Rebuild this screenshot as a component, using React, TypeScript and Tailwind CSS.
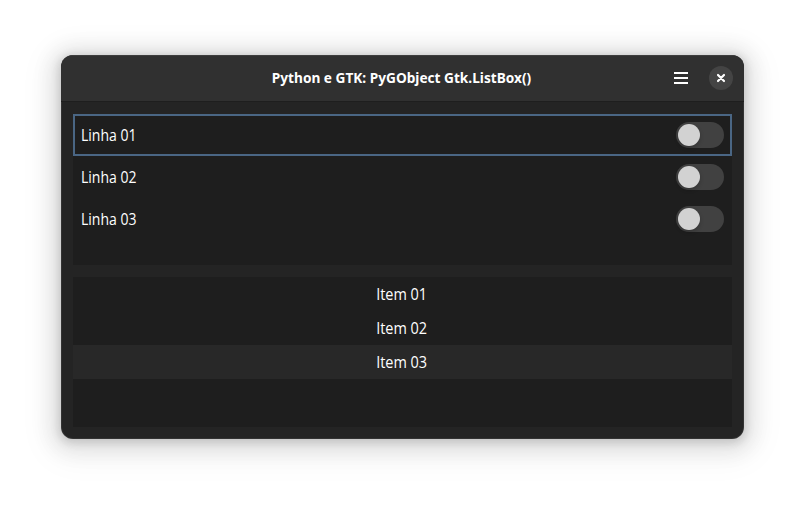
import { useState } from "react";

const lines = ["Linha 01", "Linha 02", "Linha 03"];
const items = ["Item 01", "Item 02", "Item 03"];

function Switch({ label }: { label: string }) {
  const [on, setOn] = useState(false);
  return (
    <button
      role="switch"
      aria-checked={on}
      aria-label={label}
      onClick={() => setOn(!on)}
      className={`flex h-[26px] w-12 items-center rounded-full p-0.5 ${on ? "justify-end bg-[#3584e4]" : "bg-[#414141]"}`}
    >
      <span className="size-[22px] rounded-full bg-[#d2d2d2] shadow-[0_2px_4px_rgba(0,0,0,0.2)]" />
    </button>
  );
}

function HeaderBar() {
  return (
    <header className="grid h-[47px] shrink-0 grid-cols-[1fr_auto_1fr] items-center border-b border-[#1e1e1e] bg-[#303030] px-[11px] shadow-[inset_0_1px_0_rgba(255,255,255,0.07)]">
      <span />
      <h1 className="origin-center -translate-x-px -translate-y-px scale-x-[0.91] whitespace-nowrap font-['Noto_Sans',sans-serif] text-[15px] font-bold text-white">
        Python e GTK: PyGObject Gtk.ListBox()
      </h1>
      <div className="flex items-center justify-end gap-[21px]">
        <button aria-label="Menu" className="flex w-3.5 flex-col gap-[3px]">
          <span className="h-0.5 w-full bg-white" />
          <span className="h-0.5 w-full bg-white" />
          <span className="h-0.5 w-full bg-white" />
        </button>
        <button aria-label="Close" className="flex size-6 items-center justify-center rounded-full bg-[#444444]">
          <svg viewBox="0 0 10 10" className="size-2.5" fill="none" stroke="white" strokeWidth="2.2" strokeLinecap="round">
            <path d="M2 2l6 6M8 2L2 8" />
          </svg>
        </button>
      </div>
    </header>
  );
}

export default function App() {
  return (
    <div className="flex h-[506px] w-[805px] items-start overflow-hidden bg-white pl-[61px] pt-[55px] font-['Open_Sans',sans-serif]">
      <main className="flex h-[384px] w-[683px] flex-col overflow-hidden rounded-xl bg-[#242424] text-[15.4px] text-white shadow-[0_2px_8px_2px_rgba(0,0,0,0.13),0_3px_20px_10px_rgba(0,0,0,0.09),0_6px_32px_16px_rgba(0,0,0,0.04),inset_0_0_0_1px_rgba(255,255,255,0.07)]">
        <HeaderBar />
        <div className="flex flex-1 flex-col gap-3 p-3">
          <ul className="h-[151px] bg-[#1e1e1e]">
            {lines.map((line, i) => (
              <li
                key={line}
                className={`flex h-[42px] items-center justify-between border-2 px-1.5 leading-6 ${i === 0 ? "border-[#4a6684]" : "border-transparent"}`}
              >
                <span className="origin-left translate-y-px scale-x-[0.91]">{line}</span>
                <Switch label={line} />
              </li>
            ))}
          </ul>
          <ul className="h-[150px] bg-[#1e1e1e]">
            {items.map((item, i) => (
              <li key={item} className={`flex h-[34px] items-center justify-center leading-6 ${i === 2 ? "bg-[#282828]" : ""}`}>
                <span className="-translate-x-[0.5px] translate-y-px scale-x-[0.94]">{item}</span>
              </li>
            ))}
          </ul>
        </div>
      </main>
    </div>
  );
}
